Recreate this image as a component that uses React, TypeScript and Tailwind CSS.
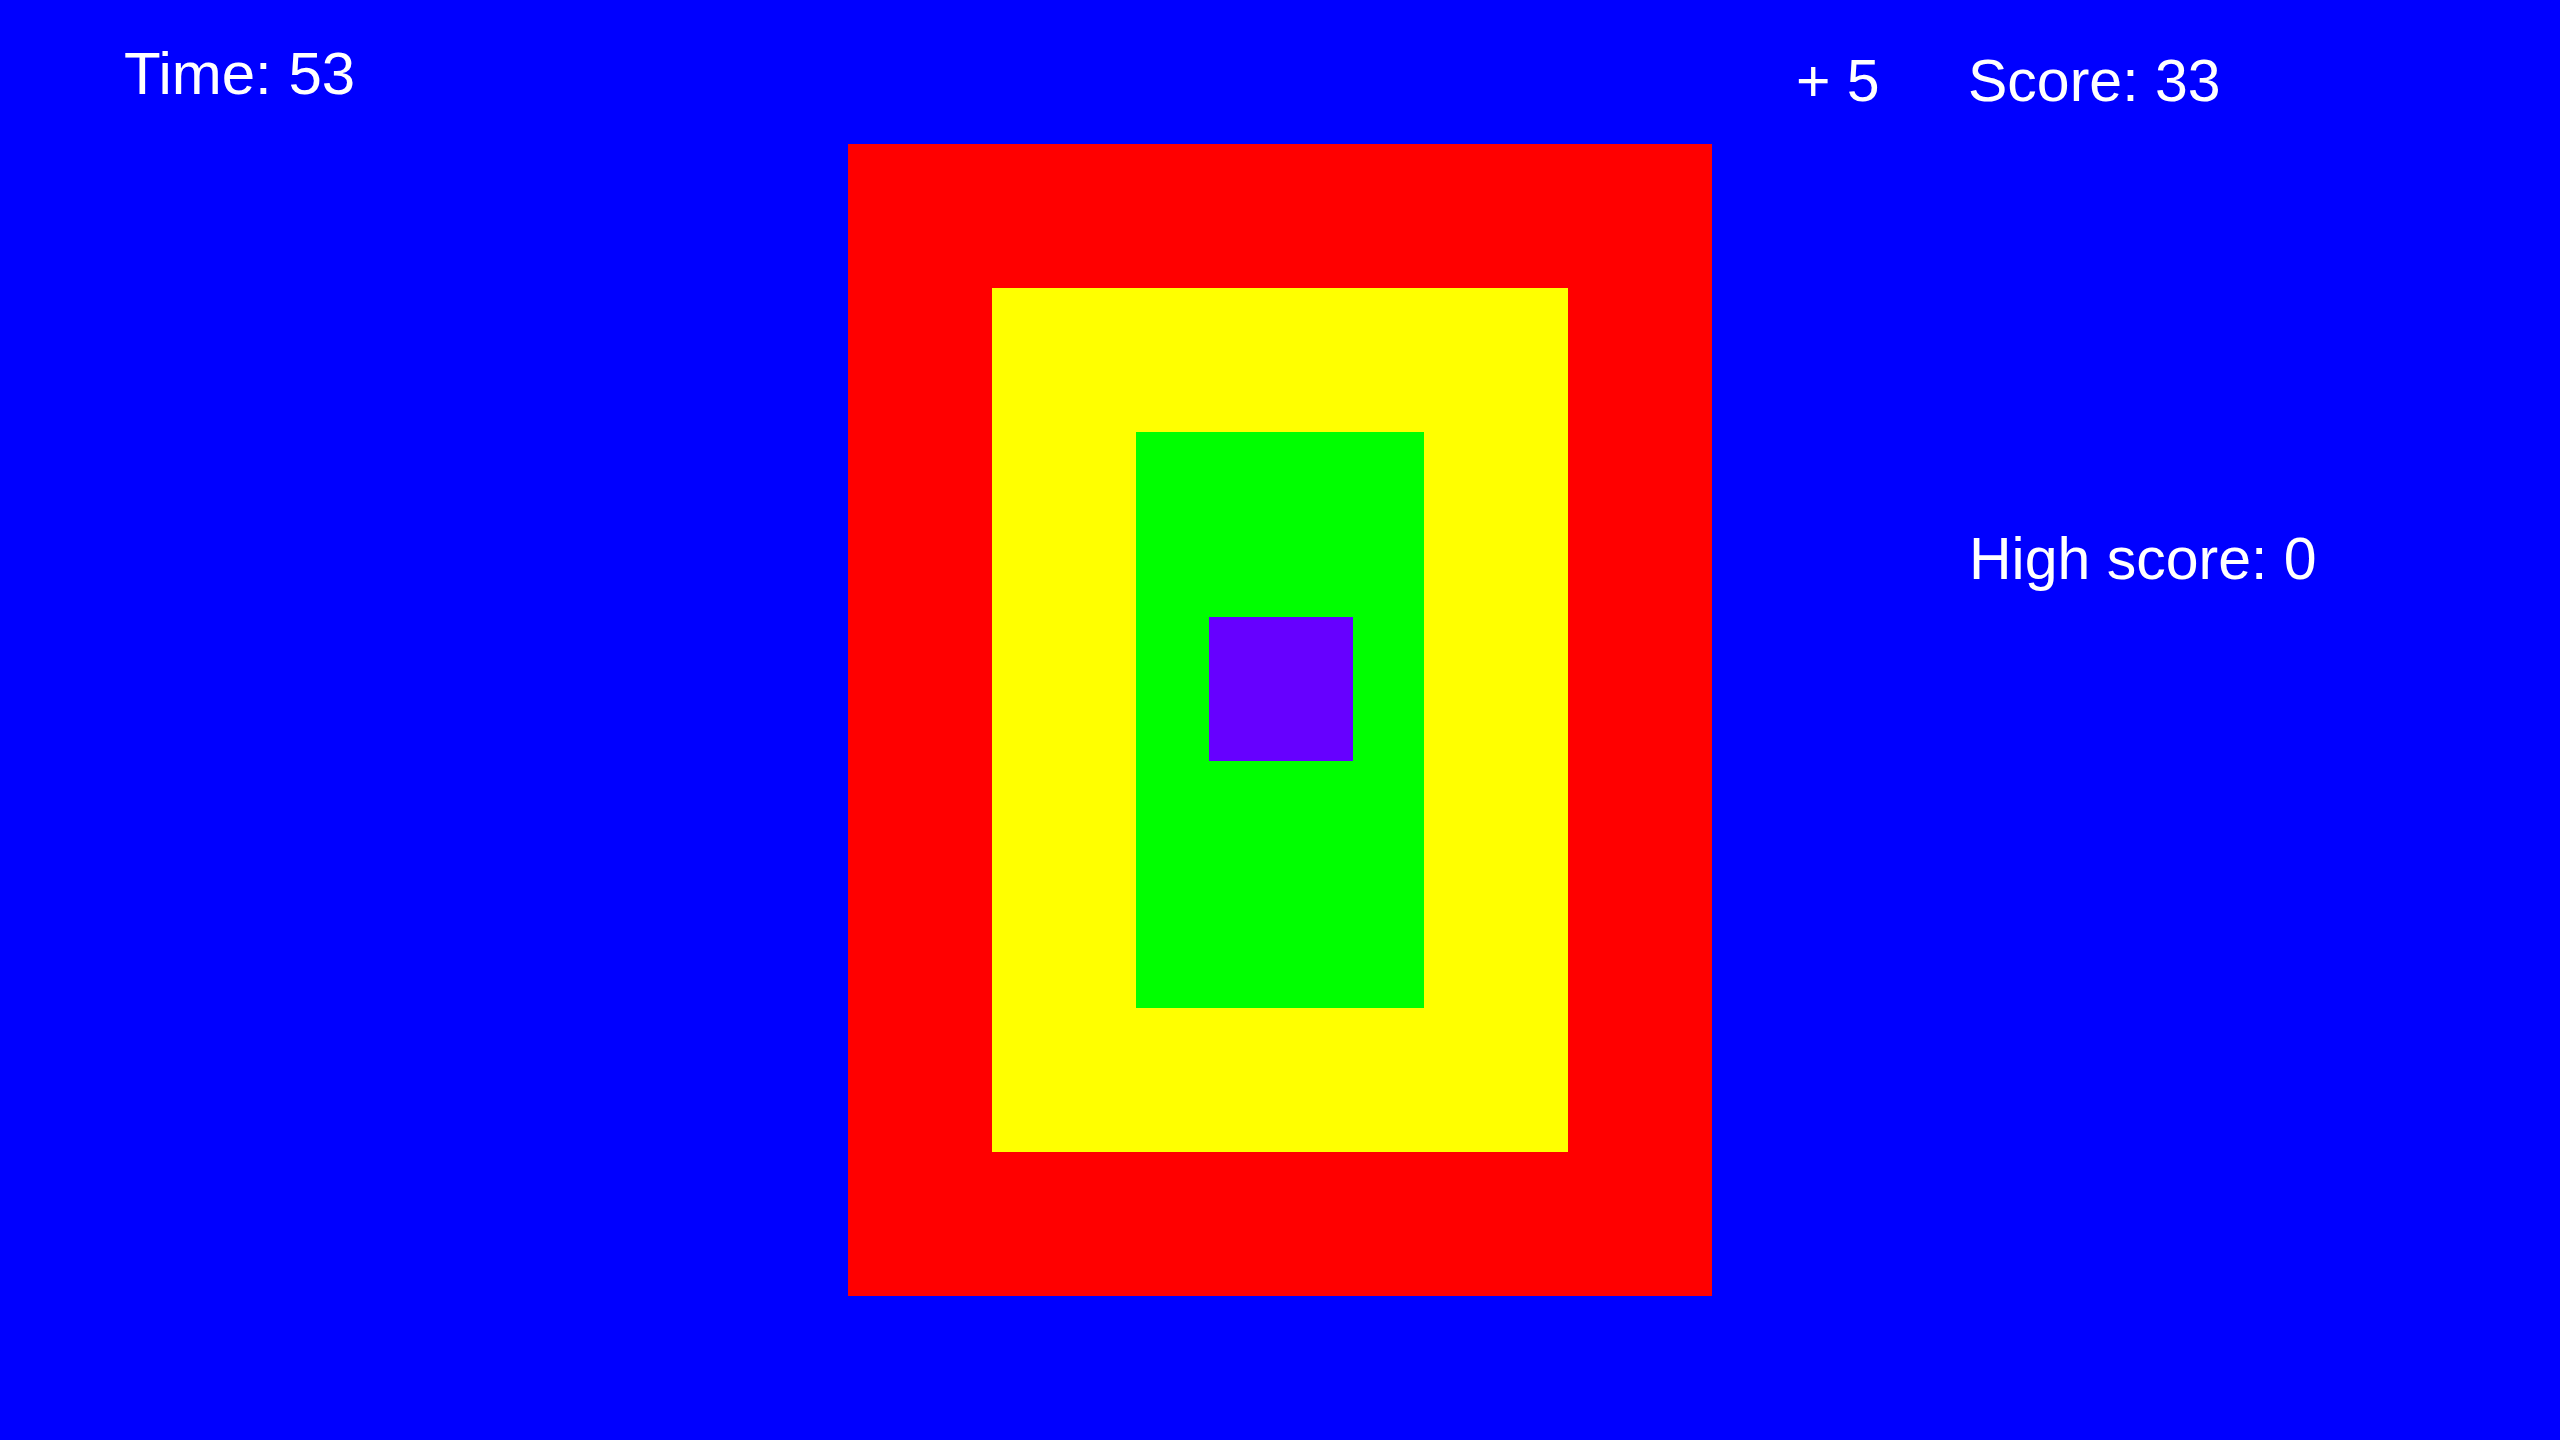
export default function App() {
  return (
    <div className="flex h-[1440px] w-[2560px] overflow-hidden bg-[#0000ff] font-['Liberation_Sans',Arial,sans-serif] text-[59px] leading-[59px] text-white">
      {/* left hud */}
      <div className="w-[848px] shrink-0 pl-[124px] pt-[44px]">
        <p className="text-[60px] leading-[60px]">Time: 53</p>
      </div>

      {/* target */}
      <div className="w-[864px] shrink-0 pt-[144px]">
        <div className="bg-[#ff0000] p-[144px]">
          <div className="bg-[#ffff00] p-[144px]">
            <div className="h-[576px] w-[288px] bg-[#00ff00] pl-[73px] pt-[185px]">
              <div className="h-[144px] w-[144px] bg-[#6600ff]" />
            </div>
          </div>
        </div>
      </div>

      {/* right hud */}
      <div className="flex-1 pt-[52px]">
        <div className="flex pl-[84px]">
          <span className="w-[172px] shrink-0">+ 5</span>
          <span>Score: 33</span>
        </div>
        <p className="mt-[419px] pl-[257px]">High score: 0</p>
      </div>
    </div>
  );
}
